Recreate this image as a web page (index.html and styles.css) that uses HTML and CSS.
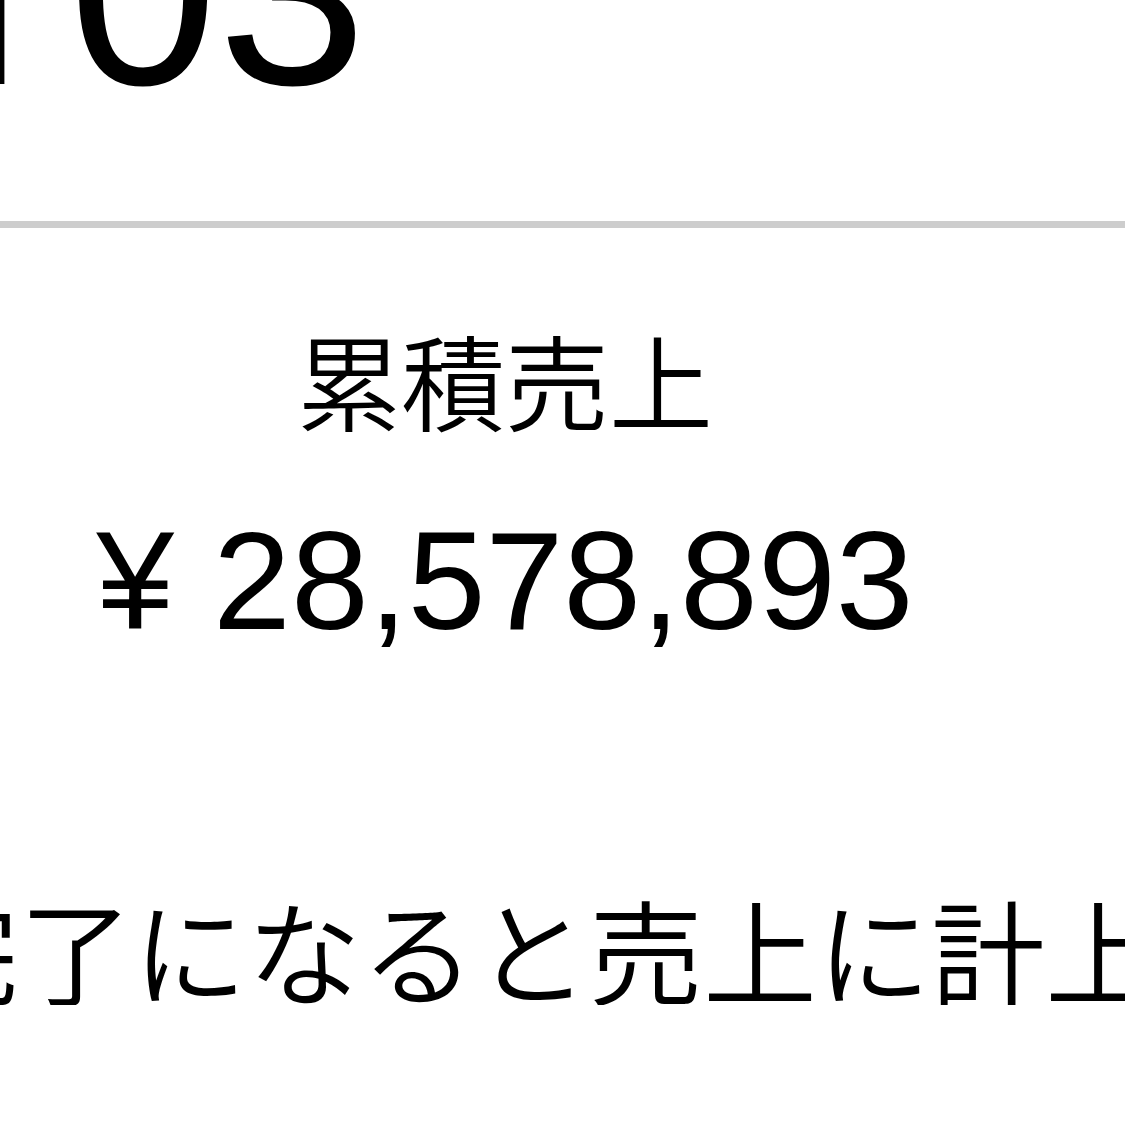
FILE: index.html
```html
<!DOCTYPE html>
<html lang="ja">

<head>
    <meta charset="UTF-8">
    <meta name="viewport" content="width=device-width, initial-scale=1.0">
    <link rel="stylesheet" href="styles.css">
    <title>売上</title>
</head>

<body>

    <div class="count"><span class="count-lead">1</span>03</div>

    <hr class="divider">

    <div class="summary">
        <div class="summary-label">累積売上</div>
        <div class="summary-amount">¥ 28,578,893</div>
    </div>

    <p class="note">完了になると売上に計上されます</p>

</body>

</html>
```

FILE: styles.css
```css
body {
    margin: 0;
    background-color: #fff;
    color: #000;
    font-family: 'Liberation Sans', 'Noto Sans CJK JP', sans-serif;
    overflow: hidden;
}

.count {
    margin-top: -143px;
    margin-left: -91px;
    font-size: 268px;
    line-height: 1;
    white-space: nowrap;
}

/* plain "1" without a foot, set a little apart from the next digit */
.count-lead {
    margin-right: 9px;
    font-family: Roboto, 'Liberation Sans', sans-serif;
}

.divider {
    margin: 95px 0 0;
    height: 7px;
    border: none;
    background-color: #cdcdcd;
}

.summary {
    width: 1010px;
    text-align: center;
}

.summary-label {
    margin-top: 99px;
    font-family: 'Noto Sans CJK JP', sans-serif;
    font-size: 104px;
    font-weight: 350;
    line-height: 1;
}

.summary-amount {
    margin-top: 80px;
    font-size: 140px;
    line-height: 1;
}

.note {
    margin: 240px 0 0 -95px;
    font-family: 'Noto Sans CJK JP', sans-serif;
    font-size: 114px;
    font-weight: 350;
    line-height: 1;
    white-space: nowrap;
}
```
